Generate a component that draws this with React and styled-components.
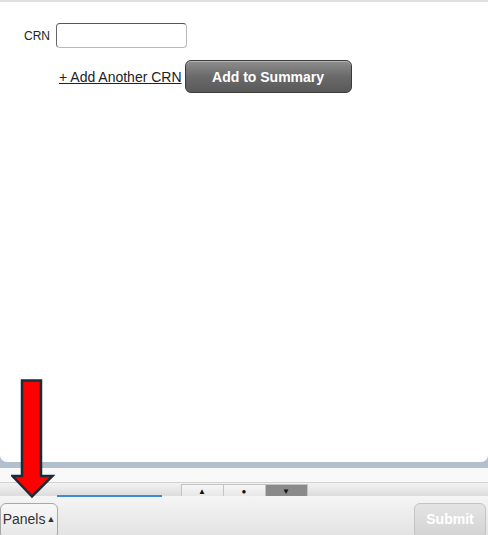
import React from 'react';
import styled, { createGlobalStyle } from 'styled-components';

const GlobalStyle = createGlobalStyle`
    html, body {
        margin: 0;
        padding: 0;
        height: 100%;
        overflow: hidden;
        font-family: "Liberation Sans", Arial, sans-serif;
    }
    #root {
        height: 100%;
    }
`;

const Page = styled.div`
    position: relative;
    height: 535px;
    display: flex;
    flex-direction: column;
    background: #f8f8f8;
`;

const Stage = styled.div`
    flex: 1;
    display: flex;
    background: #b2bfcc;
    padding-bottom: 6px;
`;

const Sheet = styled.div`
    flex: 1;
    background: #fff;
    border-top: 2px solid #e0e0e0;
    border-radius: 0 0 7px 7px;
    padding: 21px 0 0 24px;
`;

const FieldRow = styled.div`
    display: flex;
    align-items: center;
    gap: 6px;
`;

const Label = styled.label`
    font-size: 12px;
    color: #222;
`;

const CrnInput = styled.input`
    box-sizing: border-box;
    width: 131px;
    height: 25px;
    border: 1px solid #b8b8b8;
    border-top-color: #555;
    border-left-color: #666;
    border-radius: 4px;
    background: #fff;
    outline: none;
`;

const ActionRow = styled.div`
    display: flex;
    align-items: center;
    gap: 3px;
    margin-top: 12px;
    padding-left: 35px;
`;

const AddLink = styled.a`
    font-size: 14px;
    color: #222;
    text-decoration: underline;
    cursor: pointer;
`;

const DarkButton = styled.button`
    box-sizing: border-box;
    width: 167px;
    height: 33px;
    border: 1px solid #3a3a3a;
    border-radius: 6px;
    background: linear-gradient(#8e8e8e, #6a6a6a 50%, #595959);
    box-shadow: inset 0 1px 0 rgba(255, 255, 255, 0.35);
    color: #fff;
    font-family: "Liberation Sans", Arial, sans-serif;
    font-weight: bold;
    font-size: 14px;
    padding: 0;
`;

const Gap = styled.div`
    height: 14px;
    background: #f9f9f9;
`;

const Toolbar = styled.div`
    height: 13px;
    border-top: 1px solid #d2d2d2;
    background: linear-gradient(#f2f2f2, #dcdcdc);
    display: flex;
    justify-content: center;
`;

const TabGroup = styled.div`
    display: flex;
    margin-top: 1px;
    border: 1px solid #c4c4c4;
    border-bottom: none;
`;

const Tab = styled.div`
    width: 41px;
    height: 12px;
    display: flex;
    align-items: flex-end;
    justify-content: center;
    background: ${p => (p.$active ? '#8a8a8a' : 'linear-gradient(#f6f6f6, #e6e6e6)')};
    border-left: ${p => (p.$first ? 'none' : '1px solid #c4c4c4')};
    color: #111;
    font-size: 8px;
    line-height: 10px;
`;

const Footer = styled.div`
    position: relative;
    height: 39px;
    background: linear-gradient(#f5f5f5, #e3e3e3);
    display: flex;
    justify-content: space-between;
    align-items: flex-start;
    padding-top: 7px;
    box-sizing: border-box;
`;

const Progress = styled.div`
    position: absolute;
    left: 57px;
    top: -1px;
    width: 105px;
    height: 2px;
    background: #3d8ad8;
`;

const FooterButton = styled.button`
    box-sizing: border-box;
    height: 36px;
    width: ${p => p.$width}px;
    padding: 0 0 4px;
    border: 1px solid ${p => (p.$disabled ? '#c4c4c4' : '#a8a8a8')};
    border-radius: 6px;
    background: ${p => (p.$disabled ? 'linear-gradient(#e4e4e4, #d2d2d2)' : 'linear-gradient(#f8f8f8, #e6e6e6)')};
    color: ${p => (p.$disabled ? '#fff' : '#333')};
    font-family: "Liberation Sans", Arial, sans-serif;
    font-weight: ${p => (p.$disabled ? 'bold' : 'normal')};
    font-size: 14px;
    margin-right: ${p => (p.$disabled ? '2px' : '0')};
    display: flex;
    align-items: center;
    justify-content: center;
`;

const Caret = styled.span`
    font-size: 9px;
    margin-left: 1px;
`;

const Arrow = styled.svg`
    position: absolute;
    left: 11px;
    top: 379px;
`;

export default function App() {
    return (
        <Page>
            <GlobalStyle />
            <Stage>
                <Sheet>
                    <FieldRow>
                        <Label htmlFor="crn">CRN</Label>
                        <CrnInput id="crn" type="text" />
                    </FieldRow>
                    <ActionRow>
                        <AddLink>+ Add Another CRN</AddLink>
                        <DarkButton>Add to Summary</DarkButton>
                    </ActionRow>
                </Sheet>
            </Stage>
            <Gap />
            <Toolbar>
                <TabGroup>
                    <Tab $first>▲</Tab>
                    <Tab>●</Tab>
                    <Tab $active>▼</Tab>
                </TabGroup>
            </Toolbar>
            <Footer>
                <Progress />
                <FooterButton $width={58}>Panels<Caret>▲</Caret></FooterButton>
                <FooterButton $width={72} $disabled>Submit</FooterButton>
            </Footer>
            <Arrow width="44" height="120" viewBox="0 0 44 120">
                <path d="M11 1.5 H30 V97 H41.5 L21 117.5 L1.5 97 H11 Z" fill="#ff0000" stroke="#1b2c38" strokeWidth="2.5" strokeLinejoin="miter" />
            </Arrow>
        </Page>
    );
}
